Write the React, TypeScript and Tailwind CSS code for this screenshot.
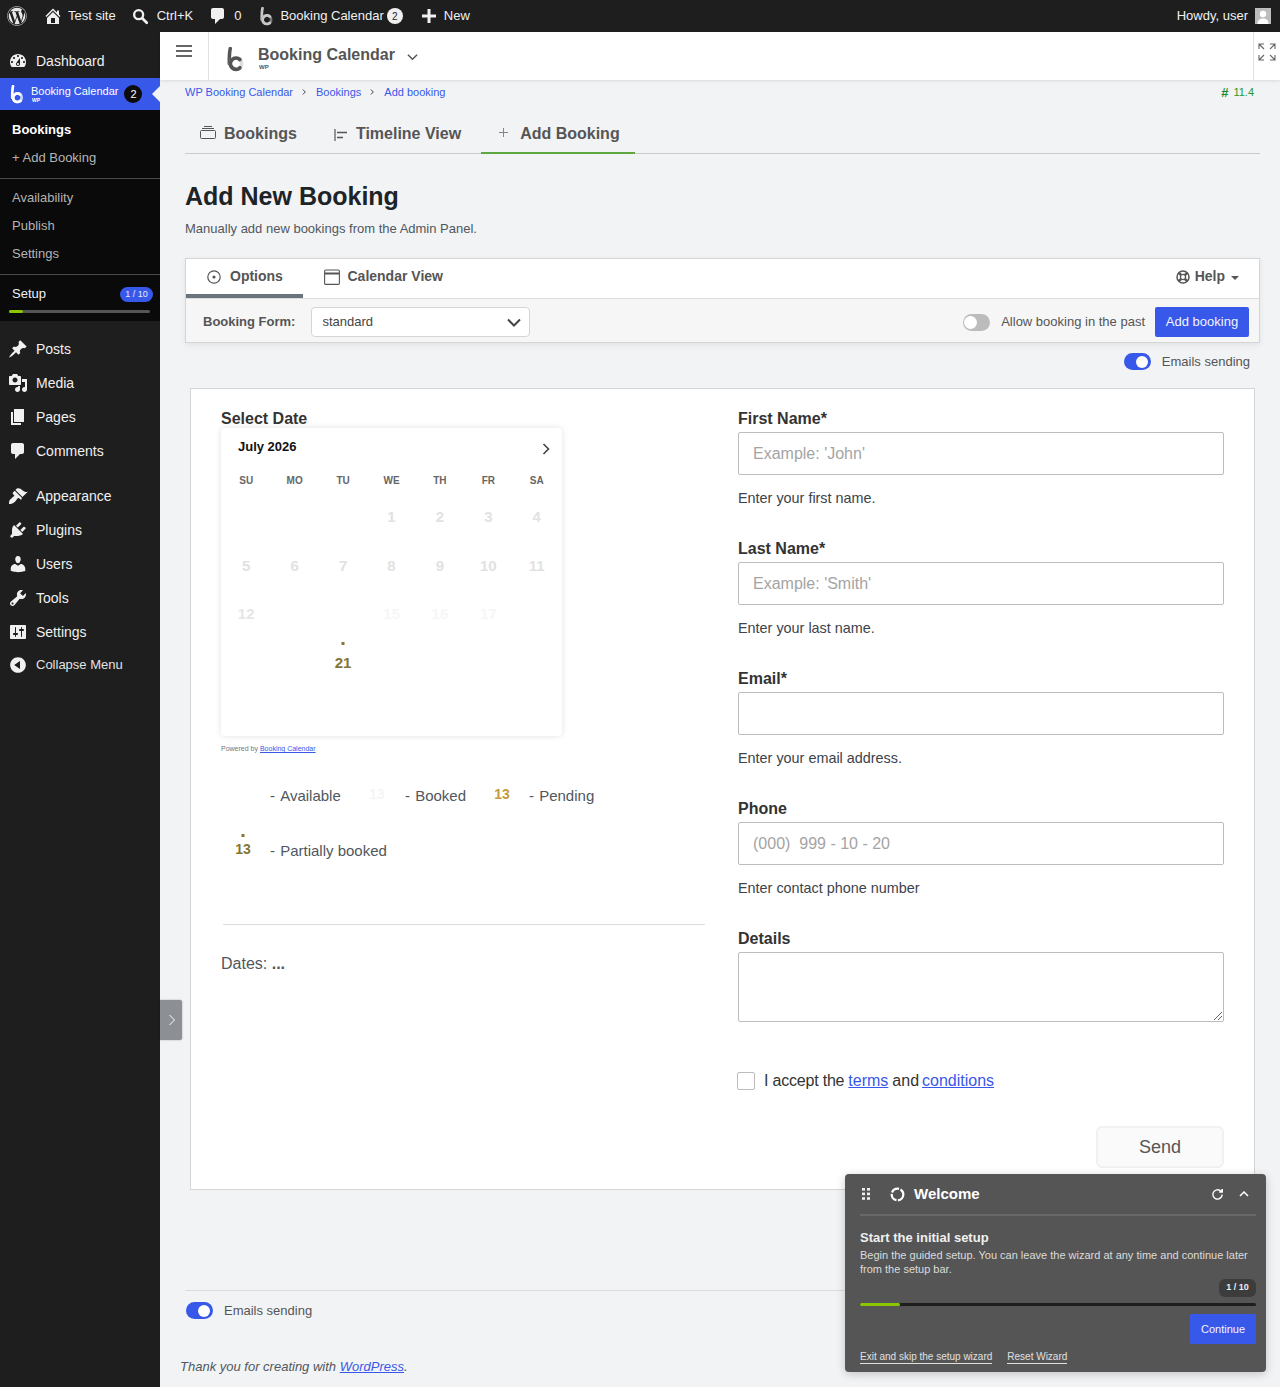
import React from "react";
import { FaWordpress } from "react-icons/fa";

const D = {
  dashboard: "M3.76 16h12.48c1.1-1.37 1.76-3.11 1.76-5 0-4.42-3.58-8-8-8s-8 3.58-8 8c0 1.89.66 3.63 1.76 5zM10 4c.55 0 1 .45 1 1s-.45 1-1 1-1-.45-1-1 .45-1 1-1zM6 6c.55 0 1 .45 1 1s-.45 1-1 1-1-.45-1-1 .45-1 1-1zm8 0c.55 0 1 .45 1 1s-.45 1-1 1-1-.45-1-1 .45-1 1-1zm-5.37 5.55L12 7v6c0 1.1-.9 2-2 2s-2-.9-2-2c0-.57.24-1.08.63-1.45zM4 10c.55 0 1 .45 1 1s-.45 1-1 1-1-.45-1-1 .45-1 1-1zm12 0c.55 0 1 .45 1 1s-.45 1-1 1-1-.45-1-1 .45-1 1-1zm-5 3c0-.55-.45-1-1-1s-1 .45-1 1 .45 1 1 1 1-.45 1-1z",
  post: "M10.44 3.02l1.82-1.82 6.36 6.35-1.83 1.82c-1.05-.68-2.48-.57-3.41.36l-.75.75c-.92.93-1.04 2.35-.35 3.41l-1.83 1.82-2.41-2.41-2.8 2.79c-.42.42-3.38 2.71-3.8 2.29s1.86-3.39 2.28-3.81l2.79-2.79L4.1 9.36l1.83-1.82c1.05.69 2.48.57 3.4-.36l.75-.75c.93-.92 1.05-2.35.36-3.41z",
  media: "M13 11V4c0-.55-.45-1-1-1h-1.67L9 1H5L3.67 3H2c-.55 0-1 .45-1 1v7c0 .55.45 1 1 1h10c.55 0 1-.45 1-1zM7 4.5c1.38 0 2.5 1.12 2.5 2.5S8.38 9.5 7 9.5 4.5 8.38 4.5 7 5.62 4.5 7 4.5zM14 6h5v10.5c0 1.38-1.12 2.5-2.5 2.5S14 17.88 14 16.5s1.12-2.5 2.5-2.5c.17 0 .34.02.5.05V9h-3V6zm-4 8.05V13h2v3.5c0 1.38-1.12 2.5-2.5 2.5S7 17.88 7 16.5 8.12 14 9.5 14c.17 0 .34.02.5.05z",
  page: "M6 15V2h10v13H6zm-1 1h8v2H3V5h2v11z",
  comment: "M5 2h9c1.1 0 2 .9 2 2v7c0 1.1-.9 2-2 2h-2l-5 5v-5H5c-1.1 0-2-.9-2-2V4c0-1.1.9-2 2-2z",
  appearance: "M14.48 11.06L7.41 3.99l1.5-1.5c.5-.56 2.3-.47 3.51.32 1.21.8 1.43 1.28 2.91 2.1 1.18.64 2.45 1.26 4.45.85zm-.71.71L6.7 4.7 4.93 6.47c-.39.39-.39 1.02 0 1.41l1.06 1.06c.39.39.39 1.03 0 1.42-.6.6-1.43 1.11-2.21 1.69-.35.26-.7.53-1.01.84C1.43 13.71.96 15.07 1 18c2.4 0 4.2-.6 6.2-2.6.3-.3.58-.66.84-1.01.58-.78 1.09-1.61 1.69-2.21.39-.39 1.03-.39 1.42 0l1.06 1.06c.39.39 1.02.39 1.41 0z",
  plugins: "M13.11 4.36L9.87 7.6 8 5.73l3.24-3.24c.35-.34 1.05-.2 1.56.32.52.51.66 1.21.31 1.55zm-8 1.77l.91-1.12 9.01 9.01-1.19.84c-.71.71-2.63 1.16-3.82 1.16H6.14L4.9 17.26c-.59.59-1.54.59-2.12 0-.59-.58-.59-1.53 0-2.12l1.24-1.24v-3.88c0-1.13.4-3.19 1.09-3.89zm7.26 3.97l3.24-3.24c.34-.35 1.04-.21 1.55.31.52.51.66 1.21.31 1.55l-3.24 3.25z",
  users: "M10 9.25c-2.27 0-2.73-3.44-2.73-3.44C7 4.02 7.82 2 9.97 2c2.16 0 2.98 2.02 2.71 3.81 0 0-.41 3.44-2.68 3.44zm0 2.57L12.72 10c2.39 0 4.52 2.33 4.52 4.53v2.49s-3.65 1.13-7.24 1.13c-3.65 0-7.24-1.13-7.24-1.13v-2.49c0-2.25 1.94-4.48 4.47-4.48z",
  tools: "M16.68 9.77c-1.34 1.34-3.3 1.67-4.95.99l-5.41 6.52c-.99.99-2.59.99-3.58 0s-.99-2.59 0-3.57l6.52-5.42c-.68-1.65-.35-3.61.99-4.95 1.28-1.28 3.12-1.62 4.72-1.06l-2.89 2.89 2.82 2.82 2.86-2.87c.53 1.58.18 3.39-1.08 4.65zM3.81 16.21c.4.39 1.04.39 1.43 0 .4-.4.4-1.04 0-1.43-.39-.4-1.03-.4-1.43 0-.39.39-.39 1.03 0 1.43z",
  settings: "M18 16V4c0-.55-.45-1-1-1H3c-.55 0-1 .45-1 1v12c0 .55.45 1 1 1h14c.55 0 1-.45 1-1zM8 11h1c.55 0 1 .45 1 1s-.45 1-1 1H8v1.5c0 .28-.22.5-.5.5s-.5-.22-.5-.5V13H6c-.55 0-1-.45-1-1s.45-1 1-1h1V5.5c0-.28.22-.5.5-.5s.5.22.5.5V11zm5-2h-1c-.55 0-1-.45-1-1s.45-1 1-1h1V5.5c0-.28.22-.5.5-.5s.5.22.5.5V7h1c.55 0 1 .45 1 1s-.45 1-1 1h-1v5.5c0 .28-.22.5-.5.5s-.5-.22-.5-.5V9z",
  collapse: "M10 2.16c4.33 0 7.84 3.51 7.84 7.84s-3.51 7.84-7.84 7.84S2.16 14.33 2.16 10 5.71 2.16 10 2.16zm2 11.72V6.12L6.18 9.97z",
  home: "M16 8.5l1.53 1.53-1.06 1.06L10 4.62l-6.47 6.47-1.06-1.06L10 2.5l4 4v-2h2v4zm-6-2.46l6 5.99V18H4v-5.97zM12 17v-5H8v5h4z",
};

function Dash({ d, className }: { d: string; className: string }) {
  return (
    <svg viewBox="0 0 20 20" fill="currentColor" fillRule="evenodd" className={className}>
      <path d={d} />
    </svg>
  );
}

function Logo({ className, accent }: { className: string; accent: string }) {
  return (
    <svg viewBox="0 0 16 24" fill="none" strokeLinecap="round" className={className}>
      <path d="M3 1.5C2 5 2 10 2 16" stroke="currentColor" strokeWidth="3.4" />
      <circle cx="8.5" cy="16" r="5.4" stroke={accent} strokeWidth="3.4" />
      <path d="M12.2 12A5.4 5.4 0 1 0 12.2 20" stroke="currentColor" strokeWidth="3.6" />
    </svg>
  );
}

function SideItem({ d, label }: { d: string; label: string }) {
  return (
    <div className="flex h-[34px] items-center text-[14px] text-[#f0f0f1]">
      <Dash d={d} className="ml-[8px] h-5 w-5 shrink-0 text-[#f0f0f1]" />
      <span className="ml-[8px]">{label}</span>
    </div>
  );
}

function SubItem({ label, strong }: { label: string; strong?: boolean }) {
  return (
    <div className={`flex h-[28px] items-center pl-3 text-[13px] ${strong ? "font-bold text-white" : "text-[#b4b4b4]"}`}>{label}</div>
  );
}

function Sidebar() {
  return (
    <aside className="flex w-[160px] shrink-0 flex-col bg-[#1e1e1e] pt-3">
      <SideItem d={D.dashboard} label="Dashboard" />
      <div className="relative flex h-8 items-center bg-[#3858e9] text-white">
        <Logo className="ml-[10px] h-[19px] w-[14px]" accent="#c9d2fa" />
        <div className="ml-[7px] flex flex-col">
          <span className="text-[11px] leading-[12px]">Booking Calendar</span>
          <span className="ml-px text-[5px] font-bold leading-[6px]">WP</span>
        </div>
        <span className="ml-[6px] flex h-[18px] w-[18px] items-center justify-center rounded-full bg-[#0c0c0c] text-[11px]">2</span>
        <span className="absolute right-0 top-[8px] h-0 w-0 border-y-[8px] border-r-[8px] border-y-transparent border-r-[#f2f3f5]" />
      </div>
      <div className="bg-[#0a0a0a] pt-[6px]">
        <SubItem label="Bookings" strong />
        <SubItem label="+ Add Booking" />
        <div className="mt-[6px] h-px bg-[#4a4a4a]" />
        <div className="mt-[5px]">
          <SubItem label="Availability" />
          <SubItem label="Publish" />
          <SubItem label="Settings" />
        </div>
        <div className="mt-[6px] h-px bg-[#4a4a4a]" />
        <div className="flex h-[35px] items-center justify-between pl-3 pr-[7px]">
          <span className="mt-[2px] text-[13px] text-[#f0f0f1]">Setup</span>
          <span className="mt-[4px] flex h-[15px] w-[33px] items-center justify-center rounded-full bg-[#3858e9] text-[9px] text-[#e8ecff]">1 / 10</span>
        </div>
        <div className="mx-[9px] h-[3px] w-[141px] rounded-full bg-[#555]">
          <div className="h-full w-[14px] rounded-full bg-[#8bc500]" />
        </div>
        <div className="h-[8px]" />
      </div>
      <div className="mt-[11px]">
        <SideItem d={D.post} label="Posts" />
        <SideItem d={D.media} label="Media" />
        <SideItem d={D.page} label="Pages" />
        <SideItem d={D.comment} label="Comments" />
      </div>
      <div className="mt-[11px]">
        <SideItem d={D.appearance} label="Appearance" />
        <SideItem d={D.plugins} label="Plugins" />
        <SideItem d={D.users} label="Users" />
        <SideItem d={D.tools} label="Tools" />
        <SideItem d={D.settings} label="Settings" />
      </div>
      <div className="flex h-8 items-center text-[13px] text-[#e2e2e2]">
        <Dash d={D.collapse} className="ml-[8px] h-5 w-5 text-[#f0f0f1]" />
        <span className="ml-[8px]">Collapse Menu</span>
      </div>
    </aside>
  );
}

function AdminBar() {
  return (
    <header className="flex h-8 items-center bg-[#1e1e1e] text-[13px] text-[#f0f0f1]">
      <FaWordpress className="ml-[7px] h-5 w-5 text-[#e8e8e8]" />
      <Dash d={D.home} className="ml-[16px] h-5 w-5" />
      <span className="ml-[5px]">Test site</span>
      <svg viewBox="0 0 20 20" fill="none" stroke="currentColor" className="ml-[15px] h-[18px] w-[18px]">
        <circle cx="8.5" cy="8.5" r="5" strokeWidth="2.6" />
        <path d="M12.5 12.5l5 5" strokeWidth="3" strokeLinecap="round" />
      </svg>
      <span className="ml-[8px]">Ctrl+K</span>
      <Dash d={D.comment} className="ml-[15px] h-5 w-5" />
      <span className="ml-[6px]">0</span>
      <Logo className="ml-[19px] h-[19px] w-[13px] text-[#c8c8c8]" accent="#777" />
      <span className="ml-[7px]">Booking Calendar</span>
      <span className="ml-[3px] flex h-4 w-4 items-center justify-center rounded-full bg-[#f0f0f1] text-[10px] text-[#1e1e1e]">2</span>
      <svg viewBox="0 0 14 14" fill="currentColor" className="ml-[19px] h-[14px] w-[14px]">
        <path d="M5.5 0h3v5.5H14v3H8.5V14h-3V8.5H0v-3h5.5z" />
      </svg>
      <span className="ml-[8px]">New</span>
      <span className="ml-auto">Howdy, user</span>
      <span className="ml-[7px] mr-[9px] flex h-4 w-4 items-end justify-center overflow-hidden bg-[#bdbdbd]">
        <svg viewBox="0 0 16 16" fill="#fff" className="h-4 w-4">
          <circle cx="8" cy="6" r="3.2" />
          <path d="M2.5 16c0-4 2.5-5.5 5.5-5.5s5.5 1.5 5.5 5.5z" />
        </svg>
      </span>
    </header>
  );
}

function TopPanel() {
  return (
    <div className="flex h-12 items-stretch bg-white shadow-[0_1px_3px_rgba(0,0,0,0.1)]">
      <div className="flex w-[49px] justify-center border-r border-[#e2e2e2] pt-[13px]">
        <div className="flex h-[12px] w-4 flex-col justify-between">
          <span className="h-[2px] bg-[#666]" />
          <span className="h-[2px] bg-[#666]" />
          <span className="h-[2px] bg-[#666]" />
        </div>
      </div>
      <Logo className="ml-[18px] mt-[15px] h-[25px] w-[17px] text-[#555]" accent="#ddd" />
      <div className="ml-[14px] mt-[13px] flex flex-col">
        <span className="text-[16px] font-bold leading-[19px] text-[#555]">Booking Calendar</span>
        <span className="ml-px text-[6px] font-bold leading-[7px] text-[#555]">WP</span>
      </div>
      <svg viewBox="0 0 12 8" fill="none" stroke="#555" strokeWidth="1.6" className="ml-[12px] mt-[21px] h-[8px] w-[11px]">
        <path d="M1 1.5l5 5 5-5" />
      </svg>
      <div className="ml-auto flex w-[27px] justify-center border-l border-[#e2e2e2] pt-[11px]">
        <svg viewBox="0 0 18 18" fill="none" stroke="#666" strokeWidth="1.1" className="h-[18px] w-[18px] shrink-0">
          <path d="M1 6V1h5M1 1l5 5M12 1h5v5M17 1l-5 5M1 12v5h5M1 17l5-5M17 12v5h-5M17 17l-5-5" />
        </svg>
      </div>
    </div>
  );
}

function Toggle({ on }: { on: boolean }) {
  return (
    <span className={`flex h-[17px] w-[27px] shrink-0 items-center rounded-full ${on ? "justify-end bg-[#3858e9] pr-[3px]" : "justify-start bg-[#bcbcbc] pl-[1px]"}`}>
      <span className={`rounded-full bg-white ${on ? "h-[12px] w-[12px]" : "h-[13px] w-[13px]"}`} />
    </span>
  );
}

function Crumbs() {
  const Sep = () => (
    <svg viewBox="0 0 6 8" fill="none" stroke="#444" strokeWidth="1.2" className="mx-[9px] h-[8px] w-[5px]">
      <path d="M1 1l3 3-3 3" />
    </svg>
  );
  return (
    <div className="flex h-6 items-center text-[11px] text-[#3858e9]">
      <span>WP Booking Calendar</span>
      <Sep />
      <span>Bookings</span>
      <Sep />
      <span>Add booking</span>
      <span className="ml-auto mr-[6px] flex items-center text-[#2a9a2a]">
        <span className="text-[13px] font-bold leading-[11px] text-[#1f8a1f]">#</span>
        <span className="ml-[5px]">11.4</span>
      </span>
    </div>
  );
}

function Tabs() {
  return (
    <div className="mt-[9px] flex h-[41px] border-b border-[#c9cbce] text-[16px] font-bold text-[#555]">
      <div className="ml-[15px] flex h-10 items-center">
        <svg viewBox="0 0 16 13" fill="none" stroke="#555" strokeWidth="1" className="-mt-[2px] h-[13px] w-4">
          <rect x="0.5" y="4.5" width="15" height="8" rx="1" />
          <path d="M2 2.5h12M4 .5h8" />
        </svg>
        <span className="ml-2 pt-[2px]">Bookings</span>
      </div>
      <div className="ml-[37px] flex h-10 items-center">
        <svg viewBox="0 0 14 14" fill="none" stroke="#555" className="mt-[3px] h-[14px] w-[14px]">
          <path d="M1 1v12" strokeWidth="1.2" />
          <path d="M3 4.5h10M3 9.5h6" strokeWidth="1.6" />
        </svg>
        <span className="ml-2 pt-[2px]">Timeline View</span>
      </div>
      <div className="ml-[20px] flex h-[41px] w-[154px] items-center border-b-2 border-[#5fa83f] pl-[18px]">
        <svg viewBox="0 0 9 9" fill="#888" className="h-[9px] w-[9px]">
          <path d="M4 0h1v4h4v1H5v4H4V5H0V4h4z" />
        </svg>
        <span className="ml-[12px] pt-[2px]">Add Booking</span>
      </div>
    </div>
  );
}

function Toolbar() {
  return (
    <div className="mt-[20px] border border-[#d4d5d7] bg-white shadow-[0_2px_6px_rgba(0,0,0,0.07)]">
      <div className="flex h-[39px] items-stretch text-[14px] font-bold text-[#555]">
        <div className="flex w-[117px] items-center border-b-4 border-[#6b747b] pl-[21px]">
          <svg viewBox="0 0 14 14" fill="none" stroke="#555" strokeWidth="1.2" className="h-[14px] w-[14px]">
            <circle cx="7" cy="7" r="6.2" />
            <circle cx="7" cy="7" r="1.6" fill="#555" stroke="none" />
          </svg>
          <span className="ml-[9px]">Options</span>
        </div>
        <div className="ml-[21px] flex items-center pb-1">
          <svg viewBox="0 0 16 16" fill="none" stroke="#555" strokeWidth="1.1" className="h-4 w-4">
            <rect x="0.6" y="1" width="14.8" height="14.4" rx="1.2" />
            <path d="M1 4.5h14" strokeWidth="2" />
          </svg>
          <span className="ml-[7.5px]">Calendar View</span>
        </div>
        <div className="ml-auto mr-[20px] flex items-center pb-1">
          <svg viewBox="0 0 14 14" fill="none" stroke="#555" className="h-[14px] w-[14px]">
            <circle cx="7" cy="7" r="6" strokeWidth="1.5" />
            <circle cx="7" cy="7" r="2.6" strokeWidth="1.3" />
            <path d="M2.8 2.8l2.4 2.4M11.2 2.8L8.8 5.2M2.8 11.2l2.4-2.4M11.2 11.2L8.8 8.8" strokeWidth="2.4" />
          </svg>
          <span className="ml-[5px]">Help</span>
          <span className="ml-[6px] mt-[2px] h-0 w-0 border-x-[4px] border-t-[4px] border-x-transparent border-t-[#555]" />
        </div>
      </div>
      <div className="flex h-11 items-center border-t border-[#dcdcde] bg-[#f6f6f7] pt-[3px] text-[13px] text-[#555]">
        <span className="ml-[17px] font-bold">Booking Form:</span>
        <div className="ml-[16px] flex h-[30px] w-[219px] items-center justify-between rounded-[4px] border border-[#d4d5d7] bg-white pl-[10px] pr-[8px] text-[#444]">
          <span>standard</span>
          <svg viewBox="0 0 14 9" fill="none" stroke="#444" strokeWidth="2" className="h-[9px] w-[14px]">
            <path d="M1 1.5l6 6 6-6" />
          </svg>
        </div>
        <span className="ml-auto"><Toggle on={false} /></span>
        <span className="ml-[11px]">Allow booking in the past</span>
        <span className="ml-[10px] mr-[10px] flex h-[30px] w-[94px] items-center justify-center rounded-[2px] bg-[#3858e9] text-[#f2f4ff]">Add booking</span>
      </div>
    </div>
  );
}

function Field({ label, placeholder, help }: { label: string; placeholder: string; help: string }) {
  return (
    <div className="mb-[32px]">
      <div className="h-[18px] text-[16px] font-bold leading-[20px] text-[#333]">{label}</div>
      <div className="mt-[5px] flex h-[43px] items-center whitespace-pre rounded-[2px] border border-[#bcbcbc] bg-white px-[14px] text-[16px] text-[#a4a4a4]">{placeholder}</div>
      <div className="mt-[14px] h-[18px] text-[14.4px] leading-[18px] text-[#3c434a]">{help}</div>
    </div>
  );
}

const rows: { n: string; c: string }[][] = [
  [{ n: "", c: "" }, { n: "", c: "" }, { n: "", c: "" }, { n: "1", c: "text-[#e2e2e2]" }, { n: "2", c: "text-[#e2e2e2]" }, { n: "3", c: "text-[#e2e2e2]" }, { n: "4", c: "text-[#e2e2e2]" }],
  [{ n: "5", c: "text-[#e2e2e2]" }, { n: "6", c: "text-[#e2e2e2]" }, { n: "7", c: "text-[#e2e2e2]" }, { n: "8", c: "text-[#e2e2e2]" }, { n: "9", c: "text-[#e2e2e2]" }, { n: "10", c: "text-[#e2e2e2]" }, { n: "11", c: "text-[#e2e2e2]" }],
  [{ n: "12", c: "text-[#e6e6e6]" }, { n: "", c: "" }, { n: "", c: "" }, { n: "15", c: "text-[#f6f6f6]" }, { n: "16", c: "text-[#f6f6f6]" }, { n: "17", c: "text-[#f6f6f6]" }, { n: "", c: "" }],
  [{ n: "", c: "" }, { n: "", c: "" }, { n: "21", c: "text-[#857537]" }, { n: "", c: "" }, { n: "", c: "" }, { n: "", c: "" }, { n: "", c: "" }],
];

function Calendar() {
  return (
    <div className="mt-px h-[308px] w-[341px] rounded-[4px] bg-white shadow-[0_0_6px_rgba(0,0,0,0.12)]">
      <div className="flex h-[37px] items-start justify-between pl-[17px] pr-[12px] pt-[10px]">
        <span className="text-[13px] font-bold leading-[18px] text-[#111]">July 2026</span>
        <svg viewBox="0 0 8 12" fill="none" stroke="#444" strokeWidth="1.6" className="mt-[5px] h-3 w-2">
          <path d="M1.5 1l5 5-5 5" />
        </svg>
      </div>
      <div className="mt-[9px] grid h-[14px] grid-cols-7 px-px">
        {["SU", "MO", "TU", "WE", "TH", "FR", "SA"].map((w) => (
          <span key={w} className="text-center text-[10px] font-bold leading-[14px] text-[#666]">{w}</span>
        ))}
      </div>
      <div className="mt-[5px] grid grid-cols-7 px-px">
        {rows.flat().map((c, i) => (
          <div key={i} className="relative flex h-[48.5px] items-center justify-center text-[15px] font-bold">
            {c.n === "21" && <span className="absolute left-1/2 top-[3px] h-[3px] w-[3px] -translate-x-1/2 bg-[#857537]" />}
            <span className={c.c}>{c.n}</span>
          </div>
        ))}
      </div>
    </div>
  );
}

function Dashed({ label }: { label: string }) {
  return (
    <>
      - <span className="ml-[1px]">{label}</span>
    </>
  );
}

function Legend() {
  return (
    <div className="text-[15px] text-[#50575e]">
      <div className="mt-[32px] flex h-5 items-center">
        <span className="w-[49px]" />
        <span className="w-[83px]"><Dashed label="Available" /></span>
        <span className="-mt-[4px] w-[48px] text-center text-[14px] font-bold leading-[16px] text-[#f5f5f5]">13</span>
        <span className="ml-[4px] w-[73px]"><Dashed label="Booked" /></span>
        <span className="-mt-[4px] w-[48px] text-center text-[14px] font-bold text-[#c49a3c]">13</span>
        <span className="ml-[3px]"><Dashed label="Pending" /></span>
      </div>
      <div className="mt-[35px] flex h-5 items-center">
        <span className="relative -mt-[4px] w-[44px] text-center text-[14px] font-bold text-[#857537]">
          <span className="absolute left-1/2 top-[-5px] h-[3px] w-[3px] -translate-x-1/2 bg-[#857537]" />
          13
        </span>
        <span className="ml-[5px]"><Dashed label="Partially booked" /></span>
      </div>
    </div>
  );
}

function FormCard() {
  return (
    <div className="mx-[5px] mt-[18px] flex h-[802px] border border-[#d4d5d7] bg-white pt-5">
      <div className="ml-[30px] w-[484px]">
        <div className="h-[18px] text-[16px] font-bold leading-[20px] text-[#333]">Select Date</div>
        <Calendar />
        <div className="mt-[8px] h-[10px] text-[7px] leading-[10px] text-[#777]">
          Powered by <span className="text-[#3858e9] underline">Booking Calendar</span>
        </div>
        <Legend />
        <div className="ml-[2px] mt-[63px] h-px w-[482px] bg-[#dcdcde]" />
        <div className="mt-[29px] text-[16px] leading-[20px] text-[#50575e]">
          Dates: <span className="font-bold">...</span>
        </div>
      </div>
      <div className="ml-[33px] w-[486px]">
        <Field label="First Name*" placeholder="Example: 'John'" help="Enter your first name." />
        <Field label="Last Name*" placeholder="Example: 'Smith'" help="Enter your last name." />
        <Field label="Email*" placeholder="" help="Enter your email address." />
        <Field label="Phone" placeholder="(000)  999 - 10 - 20" help="Enter contact phone number" />
        <div className="h-[18px] text-[16px] font-bold leading-[20px] text-[#333]">Details</div>
        <div className="relative mt-[5px] h-[70px] rounded-[2px] border border-[#bcbcbc] bg-white">
          <svg viewBox="0 0 8 8" stroke="#666" className="absolute bottom-px right-px h-2 w-2">
            <path d="M0 8l8-8M4 8l4-4" />
          </svg>
        </div>
        <div className="-ml-px mt-[50px] flex h-[18px] items-center text-[16px] text-[#333]">
          <span className="h-[18px] w-[18px] rounded-[2px] border border-[#bcbcbc] bg-white" />
          <span className="ml-[9px] tracking-[-0.2px]">I accept the</span>
          <span className="ml-[4px] text-[#3858e9] underline">terms</span>
          <span className="ml-[4px]">and</span>
          <span className="ml-[3px] text-[#3858e9] underline">conditions</span>
        </div>
        <div className="mt-[36px] flex justify-end">
          <span className="flex h-[42px] w-[128px] items-center justify-center rounded-[6px] border-2 border-[#f1f1f1] bg-[#fafafa] text-[18px] text-[#555]">Send</span>
        </div>
      </div>
    </div>
  );
}

function Footer() {
  return (
    <div className="mt-[100px]">
      <div className="h-px bg-[#dcdcde]" />
      <div className="mt-[11px] flex h-[17px] items-center pl-px text-[13px] text-[#555]">
        <Toggle on />
        <span className="ml-[11px]">Emails sending</span>
      </div>
      <div className="-ml-[5px] mt-[38px] text-[13px] italic text-[#50575e]">
        Thank you for creating with <span className="text-[#3858e9] underline">WordPress</span>.
      </div>
    </div>
  );
}

function Wizard() {
  return (
    <div className="absolute left-[845px] top-[1174px] h-[198px] w-[421px] rounded-[4px] bg-[#555] pl-[15px] pr-[10px] text-white shadow-[0_2px_10px_rgba(0,0,0,0.2)]">
      <div className="flex h-[42px] items-center border-b-2 border-[#686868]">
        <svg viewBox="0 0 8 12" fill="#eee" className="ml-[2px] h-3 w-2">
          <rect x="0" y="0" width="3" height="2.6" /><rect x="5" y="0" width="3" height="2.6" />
          <rect x="0" y="4.6" width="3" height="2.6" /><rect x="5" y="4.6" width="3" height="2.6" />
          <rect x="0" y="9.2" width="3" height="2.6" /><rect x="5" y="9.2" width="3" height="2.6" />
        </svg>
        <svg viewBox="0 0 16 16" fill="none" stroke="#fff" strokeWidth="2.4" strokeDasharray="9 1.6" className="ml-[20px] h-[15px] w-[15px]">
          <circle cx="8" cy="8" r="6.2" />
        </svg>
        <span className="ml-[9px] text-[15px] font-bold">Welcome</span>
        <svg viewBox="0 0 14 14" fill="none" stroke="#fff" strokeWidth="1.5" className="ml-auto h-[13px] w-[13px]">
          <path d="M12 7a5 5 0 1 1-1.6-3.7" />
          <path d="M12 1v3.2H8.8" fill="#fff" stroke="none" />
          <path d="M12.2 1v3.4H8.8" strokeWidth="1.4" />
        </svg>
        <svg viewBox="0 0 10 6" fill="none" stroke="#fff" strokeWidth="1.5" className="ml-[15px] mr-[7px] h-[6px] w-[10px]">
          <path d="M1 5l4-4 4 4" />
        </svg>
      </div>
      <div className="mt-[14px] text-[13px] font-bold leading-[16px] text-[#f0f0f0]">Start the initial setup</div>
      <div className="mt-[2px] text-[11px] leading-[14px] text-[#dcdcdc]">
        Begin the guided setup. You can leave the wizard at any time and continue later from the setup bar.
      </div>
      <div className="mt-[3px] flex justify-end">
        <span className="flex h-[18px] w-[37px] items-center justify-center rounded-[6px] bg-[#3c3c3c] text-[9px] font-bold text-[#eee]">1 / 10</span>
      </div>
      <div className="mt-[6px] h-[3px] rounded-full bg-[#1e1e1e]">
        <div className="h-full w-[40px] rounded-full bg-[#8bc500]" />
      </div>
      <div className="mt-[8px] flex justify-end">
        <span className="flex h-[30px] w-[66px] items-center justify-center rounded-[2px] bg-[#3858e9] text-[11px] text-[#f2f4ff]">Continue</span>
      </div>
      <div className="mt-[6px] flex gap-[15px] text-[10px] leading-[13px] text-[#e0e0e0]">
        <span className="border-b border-[#e0e0e0]">Exit and skip the setup wizard</span>
        <span className="border-b border-[#e0e0e0]">Reset Wizard</span>
      </div>
    </div>
  );
}

export default function App() {
  return (
    <div className="relative flex min-h-[1387px] flex-col overflow-hidden bg-[#f2f3f5] font-['Liberation_Sans',Arial,sans-serif]">
      <AdminBar />
      <div className="flex flex-1">
        <Sidebar />
        <main className="min-w-0 flex-1">
          <TopPanel />
          <div className="pl-[25px] pr-[20px]">
            <Crumbs />
            <Tabs />
            <h1 className="mt-[27px] h-[30px] text-[25px] font-bold leading-[30px] text-[#1d2327]">Add New Booking</h1>
            <p className="mt-[9px] h-[18px] text-[13px] leading-[18px] text-[#50575e]">Manually add new bookings from the Admin Panel.</p>
            <Toolbar />
            <div className="mt-[10px] flex h-[17px] items-center justify-end pr-[10px] text-[13px] text-[#555]">
              <Toggle on />
              <span className="ml-[11px]">Emails sending</span>
            </div>
            <FormCard />
            <Footer />
          </div>
        </main>
      </div>
      <div className="absolute left-[160px] top-[1000px] flex h-[40px] w-[22px] items-center justify-center rounded-r-[2px] bg-[#8c8f94] shadow-[0_0_2px_rgba(0,0,0,0.3)]">
        <svg viewBox="0 0 8 12" fill="none" stroke="#fff" strokeWidth="1" className="ml-[2px] h-3 w-2">
          <path d="M1.5 1l5 5-5 5" />
        </svg>
      </div>
      <Wizard />
    </div>
  );
}
